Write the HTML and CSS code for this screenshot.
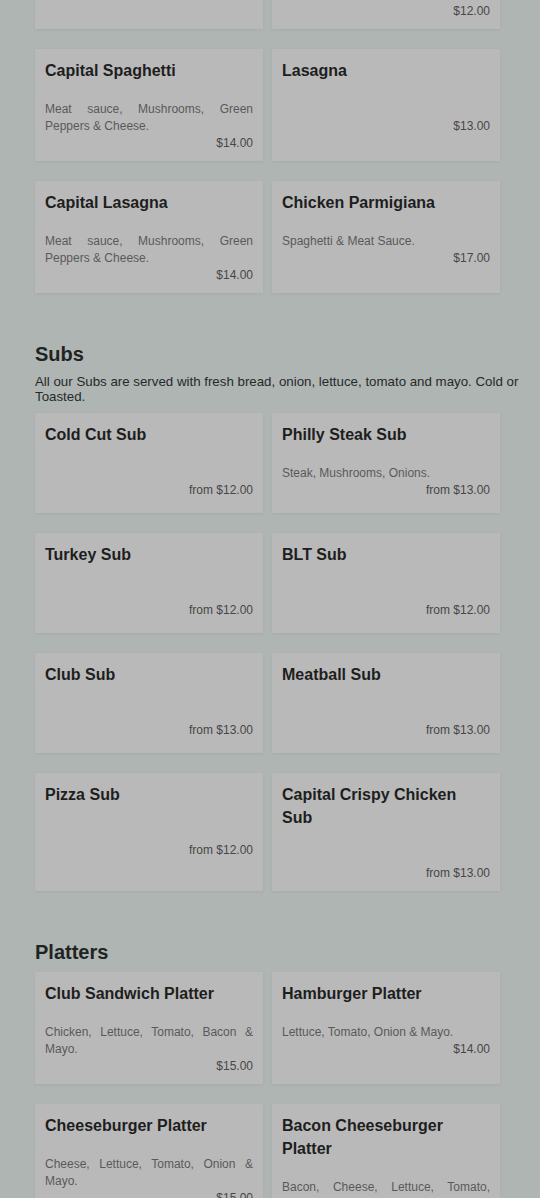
FILE: index.html
```html
<!DOCTYPE html>
<html lang="en">
<head>
  <meta charset="UTF-8">
  <title>Menu</title>
  <link rel="stylesheet" href="styles.css">
</head>
<body>

<div class="menu">

  <div class="section first">
    <div class="grid">
      <div class="card">
        <h3 class="title">Spaghetti</h3>
        <p class="desc">Meat Sauce.</p>
        <p class="price">$11.00</p>
      </div>
      <div class="card">
        <h3 class="title">Baked Ziti</h3>
        <p class="desc">Ricotta, Mozzarella, Meat Sauce &amp; Parmesan Cheese baked.</p>
        <p class="price">$12.00</p>
      </div>
      <div class="card">
        <h3 class="title">Capital Spaghetti</h3>
        <p class="desc">Meat sauce, Mushrooms, Green Peppers &amp; Cheese.</p>
        <p class="price">$14.00</p>
      </div>
      <div class="card">
        <h3 class="title">Lasagna</h3>
        <p class="desc"></p>
        <p class="price">$13.00</p>
      </div>
      <div class="card">
        <h3 class="title">Capital Lasagna</h3>
        <p class="desc">Meat sauce, Mushrooms, Green Peppers &amp; Cheese.</p>
        <p class="price">$14.00</p>
      </div>
      <div class="card">
        <h3 class="title">Chicken Parmigiana</h3>
        <p class="desc">Spaghetti &amp; Meat Sauce.</p>
        <p class="price">$17.00</p>
      </div>
    </div>
  </div>

  <div class="section">
    <h2 class="heading">Subs</h2>
    <p class="intro">All our Subs are served with fresh bread, onion, lettuce, tomato and mayo. Cold or Toasted.</p>
    <div class="grid subs">
      <div class="card">
        <h3 class="title">Cold Cut Sub</h3>
        <p class="desc"></p>
        <p class="price">from $12.00</p>
      </div>
      <div class="card">
        <h3 class="title">Philly Steak Sub</h3>
        <p class="desc">Steak, Mushrooms, Onions.</p>
        <p class="price">from $13.00</p>
      </div>
      <div class="card">
        <h3 class="title">Turkey Sub</h3>
        <p class="desc"></p>
        <p class="price">from $12.00</p>
      </div>
      <div class="card">
        <h3 class="title">BLT Sub</h3>
        <p class="desc"></p>
        <p class="price">from $12.00</p>
      </div>
      <div class="card">
        <h3 class="title">Club Sub</h3>
        <p class="desc"></p>
        <p class="price">from $13.00</p>
      </div>
      <div class="card">
        <h3 class="title">Meatball Sub</h3>
        <p class="desc"></p>
        <p class="price">from $13.00</p>
      </div>
      <div class="card">
        <h3 class="title">Pizza Sub</h3>
        <p class="desc"></p>
        <p class="price">from $12.00</p>
      </div>
      <div class="card">
        <h3 class="title">Capital Crispy Chicken Sub</h3>
        <p class="desc"></p>
        <p class="price">from $13.00</p>
      </div>
    </div>
  </div>

  <div class="section">
    <h2 class="heading">Platters</h2>
    <div class="grid">
      <div class="card">
        <h3 class="title">Club Sandwich Platter</h3>
        <p class="desc">Chicken, Lettuce, Tomato, Bacon &amp; Mayo.</p>
        <p class="price">$15.00</p>
      </div>
      <div class="card">
        <h3 class="title">Hamburger Platter</h3>
        <p class="desc">Lettuce, Tomato, Onion &amp; Mayo.</p>
        <p class="price">$14.00</p>
      </div>
      <div class="card">
        <h3 class="title">Cheeseburger Platter</h3>
        <p class="desc">Cheese, Lettuce, Tomato, Onion &amp; Mayo.</p>
        <p class="price">$15.00</p>
      </div>
      <div class="card">
        <h3 class="title">Bacon Cheeseburger Platter</h3>
        <p class="desc">Bacon, Cheese, Lettuce, Tomato, Onion &amp; Mayo.</p>
        <p class="price">$16.00</p>
      </div>
    </div>
  </div>

</div>

</body>
</html>
```

FILE: styles.css
```css
body {
    margin: 0;
    background: #afb5b3;
    font-family: "Liberation Sans", Arial, sans-serif;
    overflow: hidden;
}
.menu {
    width: 490px;
    padding-left: 35px;
    padding-bottom: 40px;
}
.section {
    margin-top: 49px;
}
.section.first {
    margin-top: -83px;
}
.heading {
    margin: 0 0 8px;
    font-size: 20px;
    line-height: 24px;
    font-weight: bold;
    color: #1f2423;
}
.intro {
    margin: 0 0 9px;
    font-size: 13.3px;
    line-height: 15px;
    color: #252a29;
}
.grid {
    display: grid;
    grid-template-columns: 228px 228px;
    column-gap: 9px;
    row-gap: 20px;
}
.card {
    background: #b9b9b9;
    padding: 10px 10px 9px;
    box-shadow: 0 1px 3px rgba(0, 0, 0, 0.06);
    box-sizing: border-box;
}
.subs .card {
    min-height: 100px;
}
.title {
    margin: 0;
    font-size: 16px;
    line-height: 23px;
    font-weight: bold;
    color: #1e1e1e;
}
.desc {
    margin: 19px 0 0;
    min-height: 17px;
    font-size: 12px;
    line-height: 17px;
    text-align: justify;
    color: #595959;
}
.price {
    margin: 0;
    font-size: 12px;
    line-height: 17px;
    text-align: right;
    color: #474747;
}
```
